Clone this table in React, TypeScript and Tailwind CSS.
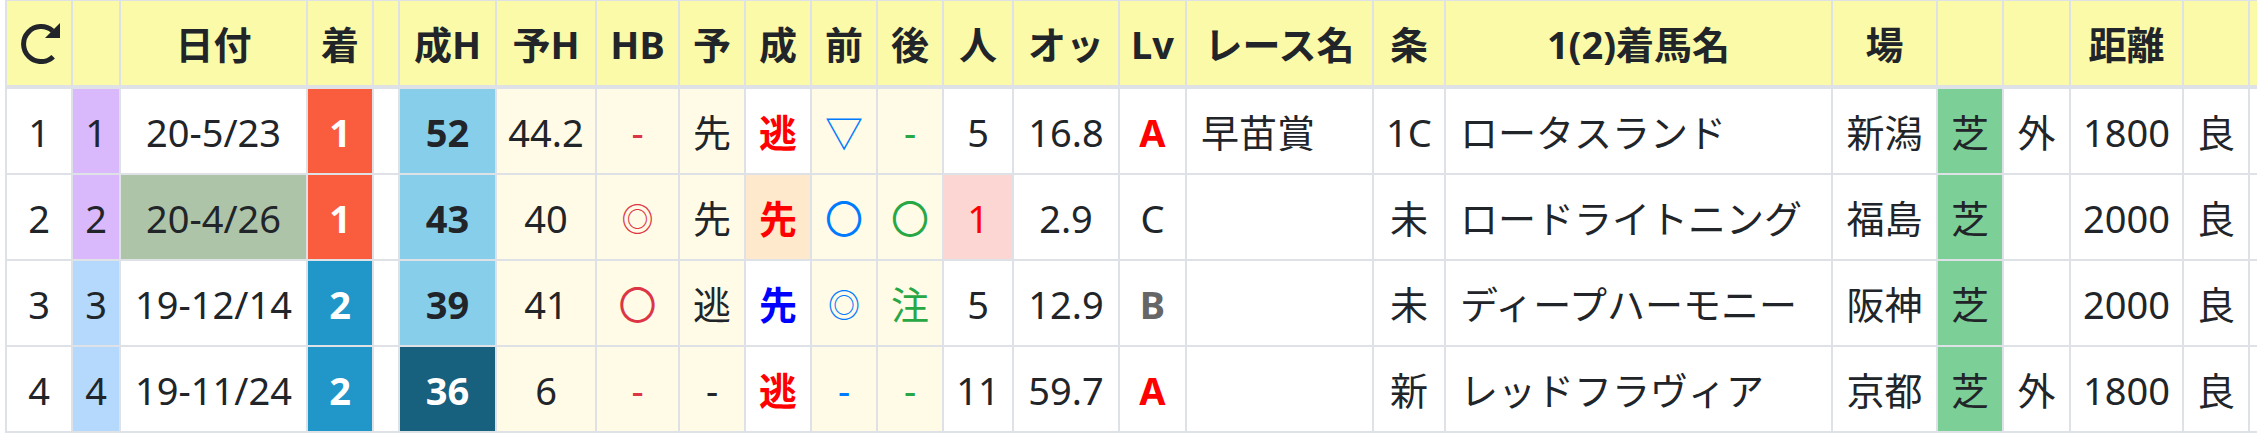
import React from "react";

type Cell = { t: string; c?: string };

const base =
  "flex items-center justify-center h-[84px] pt-[4px] whitespace-nowrap overflow-hidden";
const left = "flex items-center justify-start pl-[14px] h-[84px] pt-[4px] whitespace-nowrap overflow-hidden";

const headers: string[] = [
  "",
  "",
  "日付",
  "着",
  "",
  "成H",
  "予H",
  "HB",
  "予",
  "成",
  "前",
  "後",
  "人",
  "オッ",
  "Lv",
  "レース名",
  "条",
  "1(2)着馬名",
  "場",
  "",
  "",
  "距離",
  "",
  "",
];

const W = "bg-white";
const CR = "bg-[#fffbe6]";

const rows: Cell[][] = [
  [
    { t: "1", c: W },
    { t: "1", c: "bg-[#dab8fc]" },
    { t: "20-5/23", c: W },
    { t: "1", c: "bg-[#fa5c3e] text-white font-bold" },
    { t: "", c: W },
    { t: "52", c: "bg-[#87ceeb] font-bold" },
    { t: "44.2", c: CR },
    { t: "-", c: CR + " text-[#dc3545]" },
    { t: "先", c: CR },
    { t: "逃", c: W + " text-[#ff0000] font-bold" },
    { t: "▽", c: CR + " text-[#007bff]" },
    { t: "-", c: CR + " text-[#28a745]" },
    { t: "5", c: W },
    { t: "16.8", c: W },
    { t: "A", c: W + " text-[#ff0000] font-bold" },
    { t: "早苗賞", c: W + " L" },
    { t: "1C", c: W },
    { t: "ロータスランド", c: W + " L" },
    { t: "新潟", c: W },
    { t: "芝", c: "bg-[#7ccf97]" },
    { t: "外", c: W },
    { t: "1800", c: W },
    { t: "良", c: W },
    { t: "", c: W },
  ],
  [
    { t: "2", c: W },
    { t: "2", c: "bg-[#dab8fc]" },
    { t: "20-4/26", c: "bg-[#adc4a9]" },
    { t: "1", c: "bg-[#fa5c3e] text-white font-bold" },
    { t: "", c: W },
    { t: "43", c: "bg-[#87ceeb] font-bold" },
    { t: "40", c: CR },
    { t: "◎", c: CR + " text-[#dc3545] text-[32px]" },
    { t: "先", c: CR },
    { t: "先", c: "bg-[#ffe9cc] text-[#ff0000] font-bold" },
    { t: "〇", c: CR + " text-[#007bff]" },
    { t: "〇", c: CR + " text-[#28a745]" },
    { t: "1", c: "bg-[#fcd6d2] text-[#ff0000]" },
    { t: "2.9", c: W },
    { t: "C", c: W },
    { t: "", c: W + " L" },
    { t: "未", c: W },
    { t: "ロードライトニング", c: W + " L" },
    { t: "福島", c: W },
    { t: "芝", c: "bg-[#7ccf97]" },
    { t: "", c: W },
    { t: "2000", c: W },
    { t: "良", c: W },
    { t: "", c: W },
  ],
  [
    { t: "3", c: W },
    { t: "3", c: "bg-[#b4d9fc]" },
    { t: "19-12/14", c: W },
    { t: "2", c: "bg-[#2196c8] text-white font-bold" },
    { t: "", c: W },
    { t: "39", c: "bg-[#87ceeb] font-bold" },
    { t: "41", c: CR },
    { t: "〇", c: CR + " text-[#dc3545]" },
    { t: "逃", c: CR },
    { t: "先", c: W + " text-[#0000ff] font-bold" },
    { t: "◎", c: CR + " text-[#007bff] text-[32px]" },
    { t: "注", c: CR + " text-[#28a745]" },
    { t: "5", c: W },
    { t: "12.9", c: W },
    { t: "B", c: W + " text-[#666666] font-bold" },
    { t: "", c: W + " L" },
    { t: "未", c: W },
    { t: "ディープハーモニー", c: W + " L" },
    { t: "阪神", c: W },
    { t: "芝", c: "bg-[#7ccf97]" },
    { t: "", c: W },
    { t: "2000", c: W },
    { t: "良", c: W },
    { t: "", c: W },
  ],
  [
    { t: "4", c: W },
    { t: "4", c: "bg-[#b4d9fc]" },
    { t: "19-11/24", c: W },
    { t: "2", c: "bg-[#2196c8] text-white font-bold" },
    { t: "", c: W },
    { t: "36", c: "bg-[#17607e] text-white font-bold" },
    { t: "6", c: CR },
    { t: "-", c: CR + " text-[#dc3545]" },
    { t: "-", c: CR },
    { t: "逃", c: W + " text-[#ff0000] font-bold" },
    { t: "-", c: CR + " text-[#007bff]" },
    { t: "-", c: CR + " text-[#28a745]" },
    { t: "11", c: W },
    { t: "59.7", c: W },
    { t: "A", c: W + " text-[#ff0000] font-bold" },
    { t: "", c: W + " L" },
    { t: "新", c: W },
    { t: "レッドフラヴィア", c: W + " L" },
    { t: "京都", c: W },
    { t: "芝", c: "bg-[#7ccf97]" },
    { t: "外", c: W },
    { t: "1800", c: W },
    { t: "良", c: W },
    { t: "", c: W },
  ],
];

function RedoIcon() {
  return (
    <svg
      width="42"
      height="42"
      viewBox="0 0 42 42"
      className="shrink-0 -mt-[4px] ml-[2px]"
      aria-hidden="true"
    >
      <path
        d="M 34.2 34.7 A 17.5 17.5 0 1 1 33.6 8.9"
        fill="none"
        stroke="#212529"
        strokeWidth="5"
      />
      <path d="M 41 1 L 41 16 L 26 16 Z" fill="#212529" />
    </svg>
  );
}

export default function App() {
  return (
    <div className="w-full h-[438px] overflow-hidden bg-white text-[#212529] font-['Noto_Sans','Noto_Sans_CJK_JP',sans-serif] text-[38px] leading-[1.3]">
      <div className="ml-[5px] grid w-max gap-[2px] bg-[#dee2e6] px-[2px] pt-[1px] pb-[2px] grid-cols-[64px_46px_185px_64px_24px_95px_98px_81px_64px_64px_64px_64px_68px_104px_65px_185px_70px_385px_103px_64px_65px_111px_64px_100px]">
        {headers.map((h, i) => (
          <div
            key={"h" + i}
            className="flex items-center justify-center h-[86px] pt-[4px] border-b-2 border-[#dee2e6] bg-[#fafaa9] font-bold whitespace-nowrap overflow-hidden"
          >
            {i === 0 ? <RedoIcon /> : h}
          </div>
        ))}
        {rows.map((r, ri) =>
          r.map((cell, ci) => {
            const isLeft = (cell.c || "").endsWith(" L");
            const cls = (cell.c || "").replace(/ L$/, "");
            return (
              <div key={ri + "-" + ci} className={(isLeft ? left : base) + " " + cls}>
                {cell.t}
              </div>
            );
          })
        )}
      </div>
    </div>
  );
}
